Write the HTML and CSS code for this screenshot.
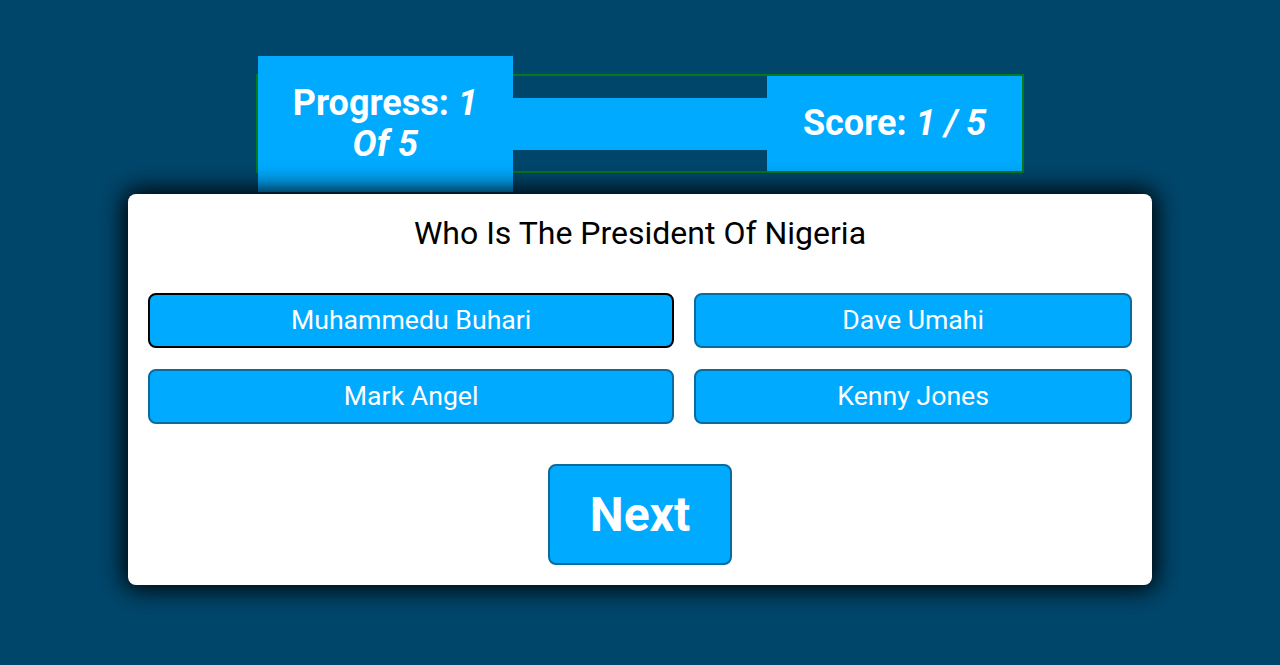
FILE: index.html
```html
<!DOCTYPE html>
<html lang="en">
<head>
<meta charset="utf-8">
<title>Quiz</title>
<link rel="stylesheet" href="styles.css">
</head>
<body>
<div class="page">
  <header class="status">
    <div class="progress">Progress: <em>1 Of 5</em></div>
    <div class="bar"></div>
    <div class="score">Score: <em>1 / 5</em></div>
  </header>
  <main class="card">
    <h2 class="question">Who Is The President Of Nigeria</h2>
    <div class="options">
      <button class="option selected">Muhammedu Buhari</button>
      <button class="option">Dave Umahi</button>
      <button class="option">Mark Angel</button>
      <button class="option">Kenny Jones</button>
    </div>
    <div class="actions">
      <button class="next">Next</button>
    </div>
  </main>
</div>
</body>
</html>
```
FILE: styles.css
```css
html, body {
  margin: 0;
  padding: 0;
}
body {
  background: #00466b;
  font-family: Roboto, "Liberation Sans", sans-serif;
  height: 665px;
  overflow: hidden;
}
.page {
  display: flex;
  flex-direction: column;
  align-items: center;
  padding-top: 74px;
}
.status {
  width: 768px;
  height: 99px;
  box-sizing: border-box;
  border: 2px solid #007a1c;
  display: flex;
  align-items: center;
}
.progress, .score, .bar {
  flex: 0 0 33.3333%;
  box-sizing: border-box;
}
.progress, .score {
  background: #00aaff;
  color: #fff;
  font-weight: 700;
  font-size: 36px;
  line-height: 41px;
  text-align: center;
  padding: 27px 24px;
}
.progress {
  height: 136px;
}
.score {
  height: 95px;
}
.bar {
  height: 52px;
  background: #00aaff;
}
.card {
  position: relative;
  width: 1024px;
  box-sizing: border-box;
  margin-top: 21px;
  background: #fff;
  border-radius: 8px;
  box-shadow: 0 0 25px 4px #000;
  padding: 20px;
  height: 391px;
}
.question {
  margin: 1px 0 0;
  font-size: 32px;
  font-weight: 400;
  text-align: center;
  color: #000;
  line-height: 37.5px;
}
.options {
  margin-top: 40px;
  display: grid;
  grid-template-columns: auto auto;
  gap: 21px 20px;
}
.option {
  font-family: Roboto, "Liberation Sans", sans-serif;
  font-size: 26.67px;
  color: #fff;
  background: #00aaff;
  border: 2px solid #0a6b9e;
  border-radius: 8px;
  height: 55px;
  padding: 0 20px;
}
.option.selected {
  border-color: #000;
}
.actions {
  margin-top: 40px;
  display: flex;
  justify-content: center;
}
.next {
  font-family: Roboto, "Liberation Sans", sans-serif;
  font-size: 48px;
  font-weight: 700;
  color: #fff;
  background: #00aaff;
  border: 2px solid #0a6b9e;
  border-radius: 8px;
  padding: 20px 40px;
  line-height: normal;
}
```
